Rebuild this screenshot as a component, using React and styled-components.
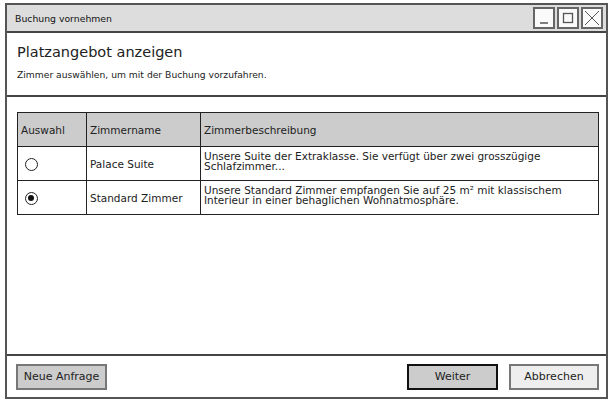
import React from 'react';
import styled, { createGlobalStyle } from 'styled-components';

const GlobalStyle = createGlobalStyle`
  *, *::before, *::after {
    box-sizing: border-box;
  }
  html, body {
    margin: 0;
    padding: 0;
    background: #ffffff;
  }
  body {
    font-family: "DejaVu Sans", "Liberation Sans", sans-serif;
    color: #222;
  }
`;

const Window = styled.div`
  margin: 3px 0 0 5px;
  width: 603px;
  height: 396px;
  border: 2px solid #555;
  display: flex;
  flex-direction: column;
  background: #fff;
`;

const TitleBar = styled.div`
  height: 28px;
  flex-shrink: 0;
  background: #dddddd;
  border-bottom: 2px solid #444;
  display: flex;
  align-items: center;
  justify-content: space-between;
  padding: 0 3px 0 8px;
`;

const TitleText = styled.span`
  font-size: 9.3px;
  color: #111;
  padding-top: 1px;
`;

const WinButtons = styled.div`
  display: flex;
  gap: 2px;
`;

const WinButton = styled.div`
  width: 22px;
  height: 22px;
  border: 2px solid #666;
  background: #fafafa;
  display: flex;
  align-items: center;
  justify-content: center;
`;

const Header = styled.div`
  flex-shrink: 0;
  height: 64px;
  padding: 11px 10px 0 10px;
  border-bottom: 2px solid #444;
`;

const Heading = styled.div`
  font-size: 14.5px;
  color: #222;
  margin-bottom: 9px;
`;

const SubText = styled.div`
  font-size: 9.2px;
  color: #222;
`;

const Content = styled.div`
  flex: 1;
  padding: 15px 7px 0 10px;
`;

const Table = styled.table`
  border-collapse: collapse;
  width: 582px;
  table-layout: fixed;
  font-size: 10.5px;
  color: #222;
`;

const HeadCell = styled.th`
  background: #cccccc;
  border: 1px solid #222;
  height: 34px;
  padding: 0 0 0 3px;
  text-align: left;
  font-weight: normal;
`;

const Cell = styled.td`
  border: 1px solid #222;
  height: 34px;
  padding: ${(p) => (p.$top ? '4px 3px 0 3px' : '0 3px')};
  vertical-align: ${(p) => (p.$top ? 'top' : 'middle')};
  line-height: 10px;
`;

const Radio = styled.span`
  display: inline-block;
  width: 13px;
  height: 13px;
  margin: 2px 0 0 4px;
  border: 1.5px solid #222;
  border-radius: 50%;
  position: relative;
  &::after {
    content: '';
    display: ${(p) => (p.$checked ? 'block' : 'none')};
    position: absolute;
    left: 2px;
    top: 2px;
    width: 6px;
    height: 6px;
    border-radius: 50%;
    background: #111;
  }
`;

const Footer = styled.div`
  flex-shrink: 0;
  border-top: 2px solid #444;
  height: 43px;
  display: flex;
  align-items: center;
  padding: 0 7px 0 9px;
  gap: 11px;
`;

const Button = styled.div`
  height: 26px;
  width: ${(p) => p.$w}px;
  display: flex;
  align-items: center;
  justify-content: center;
  font-size: 11px;
  color: #222;
  background: ${(p) => p.$bg};
  border: ${(p) => (p.$primary ? '2px solid #111' : '2px solid #777')};
  margin-left: ${(p) => (p.$push ? 'auto' : '0')};
`;

const rooms = [
  {
    name: 'Palace Suite',
    desc: 'Unsere Suite der Extraklasse. Sie verfügt über zwei grosszügige Schlafzimmer...',
    checked: false,
  },
  {
    name: 'Standard Zimmer',
    desc: 'Unsere Standard Zimmer empfangen Sie auf 25 m² mit klassischem Interieur in einer behaglichen Wohnatmosphäre.',
    checked: true,
  },
];

export default function App() {
  return (
    <>
      <GlobalStyle />
      <Window>
        <TitleBar>
          <TitleText>Buchung vornehmen</TitleText>
          <WinButtons>
            <WinButton>
              <svg width="14" height="14" viewBox="0 0 14 14">
                <line x1="3" y1="12" x2="11" y2="12" stroke="#555" strokeWidth="1.5" />
              </svg>
            </WinButton>
            <WinButton>
              <svg width="14" height="14" viewBox="0 0 14 14">
                <rect x="2.5" y="2.5" width="9" height="9" fill="none" stroke="#555" strokeWidth="1.3" />
              </svg>
            </WinButton>
            <WinButton>
              <svg width="16" height="16" viewBox="0 0 16 16">
                <path d="M1 1 L15 15 M15 1 L1 15" stroke="#555" strokeWidth="1" />
              </svg>
            </WinButton>
          </WinButtons>
        </TitleBar>
        <Header>
          <Heading>Platzangebot anzeigen</Heading>
          <SubText>Zimmer auswählen, um mit der Buchung vorzufahren.</SubText>
        </Header>
        <Content>
          <Table>
            <colgroup>
              <col style={{ width: 69 }} />
              <col style={{ width: 114 }} />
              <col />
            </colgroup>
            <thead>
              <tr>
                <HeadCell>Auswahl</HeadCell>
                <HeadCell>Zimmername</HeadCell>
                <HeadCell>Zimmerbeschreibung</HeadCell>
              </tr>
            </thead>
            <tbody>
              {rooms.map((r) => (
                <tr key={r.name}>
                  <Cell>
                    <Radio $checked={r.checked} />
                  </Cell>
                  <Cell>{r.name}</Cell>
                  <Cell $top>{r.desc}</Cell>
                </tr>
              ))}
            </tbody>
          </Table>
        </Content>
        <Footer>
          <Button $w={91} $bg="#cccccc">Neue Anfrage</Button>
          <Button $w={91} $bg="#cccccc" $primary $push>Weiter</Button>
          <Button $w={90} $bg="#eeeeee">Abbrechen</Button>
        </Footer>
      </Window>
    </>
  );
}
